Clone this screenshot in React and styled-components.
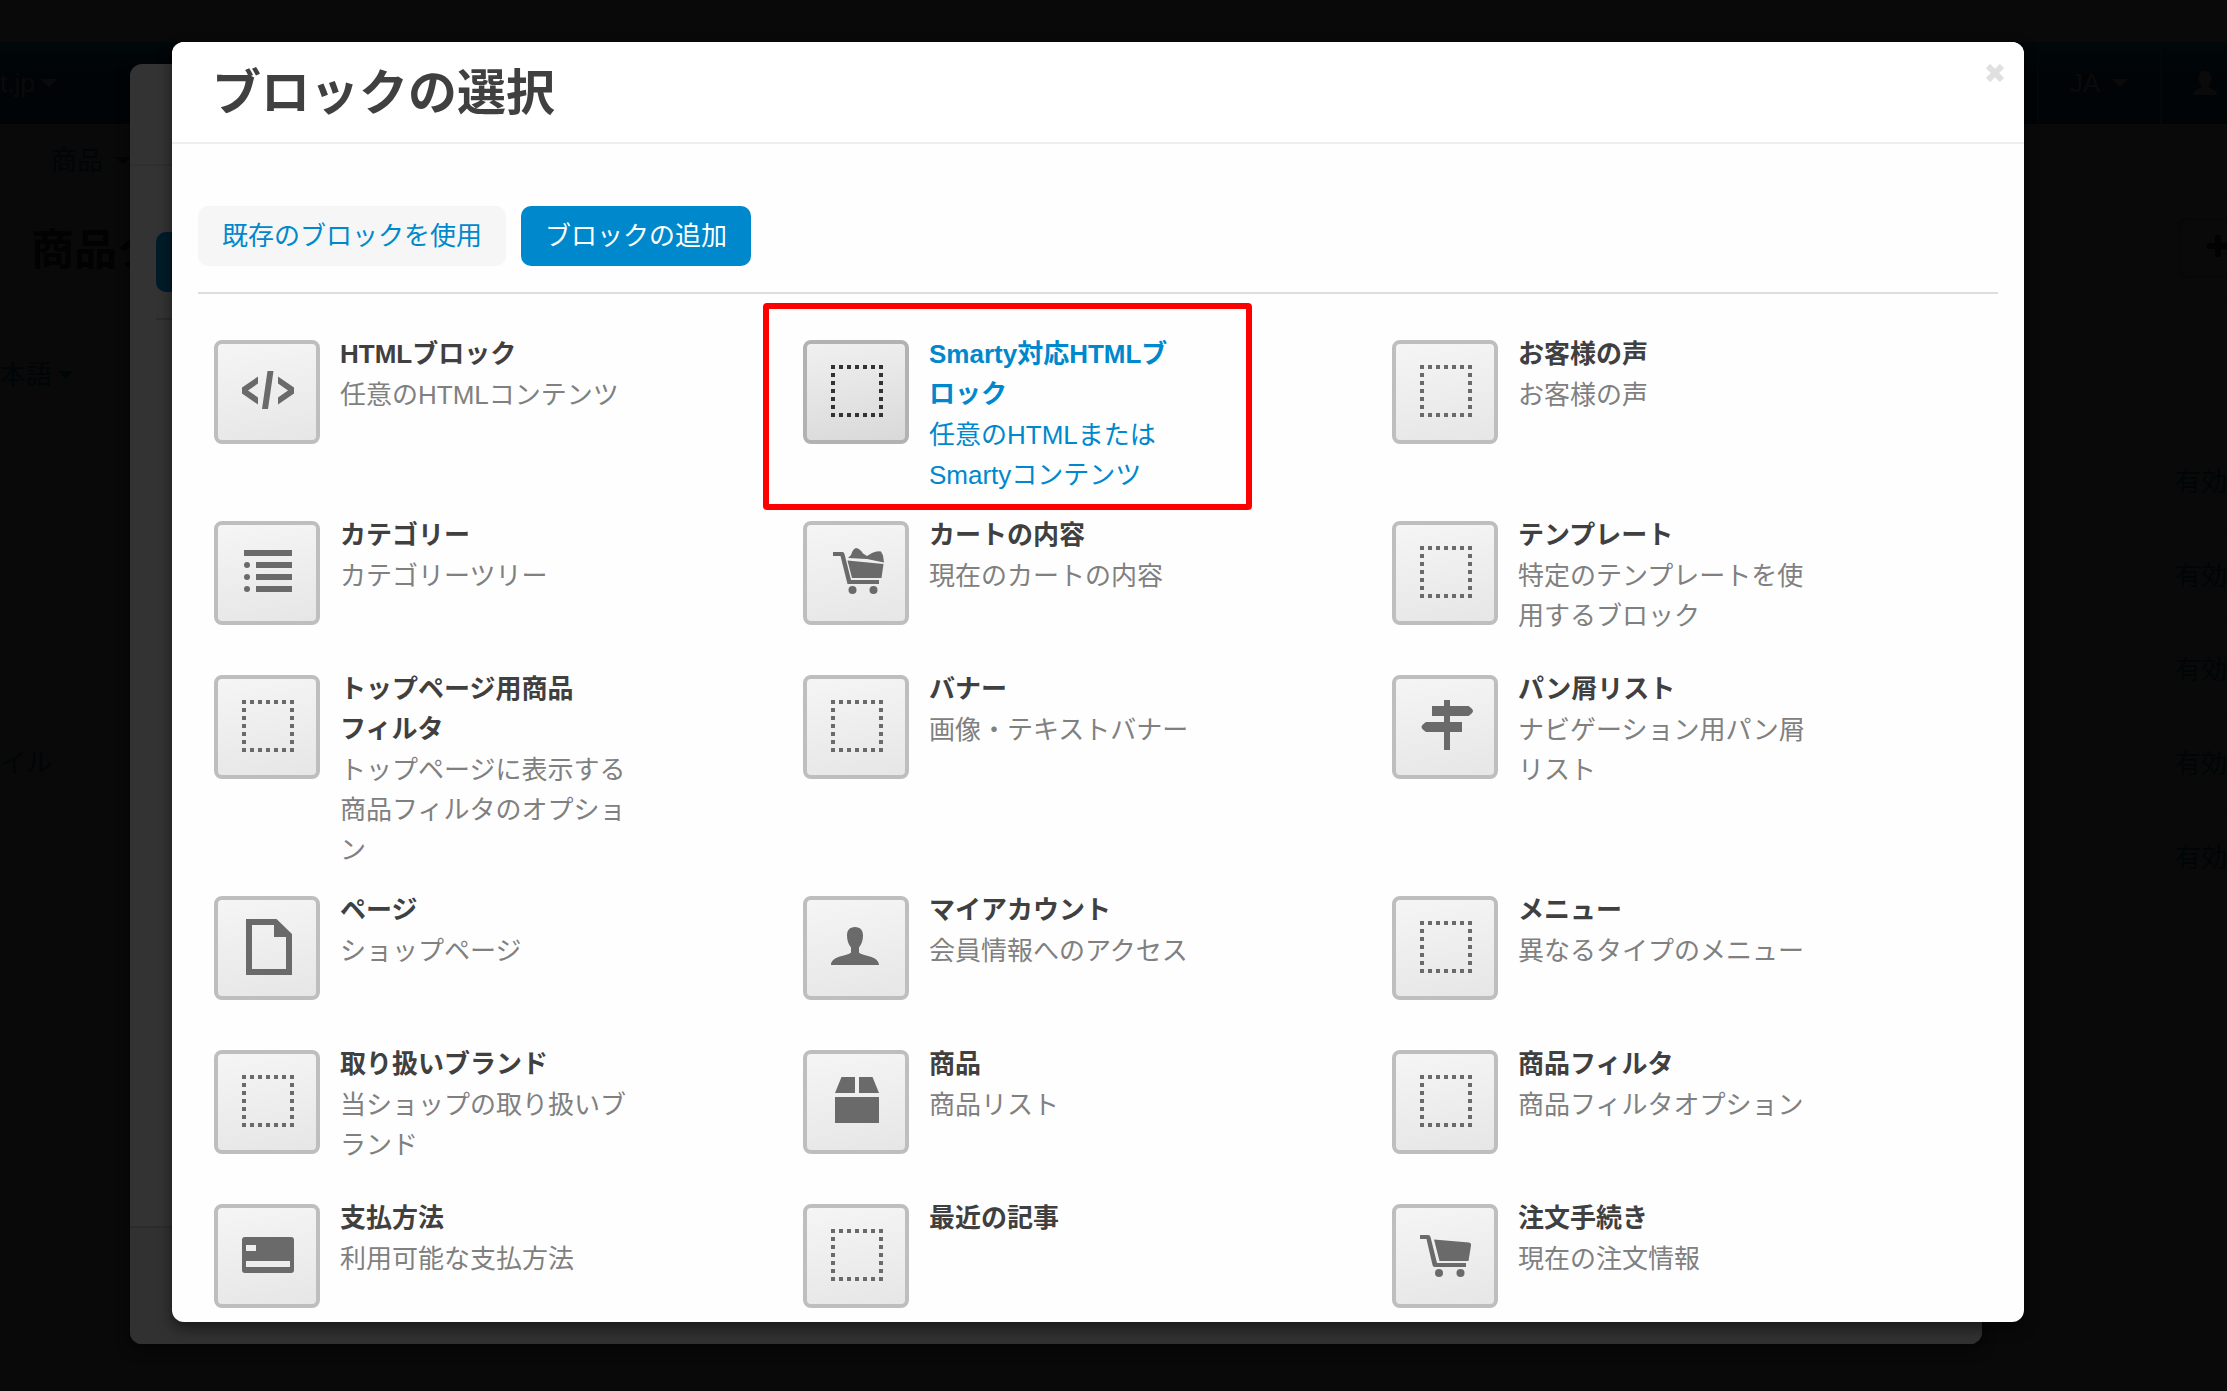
import React from "react";
import styled, { createGlobalStyle, css } from "styled-components";

const GlobalStyle = createGlobalStyle`
  * { box-sizing: border-box; }
  html, body { margin: 0; background: #090909; }
  body {
    font-family: "Liberation Sans", "Noto Sans CJK JP", sans-serif;
    font-size: 26px;
    line-height: 40px;
    color: #404040;
    overflow: hidden;
  }
  a { color: inherit; text-decoration: none; }
  h1, h2, h3, p, ul { margin: 0; padding: 0; }
  ul { list-style: none; }
`;

const Stage = styled.div`
  position: relative;
  height: 100vh;
  overflow: hidden;
`;

/* ---------- dimmed page behind the dialogs ---------- */

const Page = styled.div`
  color: #000508;
  padding-top: 42px;
`;

const TopNav = styled.nav`
  height: 82px;
  display: flex;
  justify-content: space-between;
  align-items: stretch;
  background: linear-gradient(#00080a, #000406 40%);
  color: #0b0a0a;
`;

const NavGroup = styled.div`
  display: flex;
  padding-right: 10px;
`;

const NavLink = styled.a`
  display: flex;
  align-items: center;
  gap: ${(p) => (p.$tight ? 6 : 12)}px;
`;

const NavCell = styled(NavLink)`
  padding-left: 31px;
  border-left: 2px solid #00080b;
  &:not(:last-child) { padding-right: 32px; }
`;

const Caret = styled.span`
  border: 8px solid transparent;
  border-top-color: currentColor;
  border-bottom: 0;
`;

const SubNav = styled.nav`
  height: 74px;
  padding-left: 51px;
  display: flex;
  align-items: center;
  border-bottom: 1px solid #080808;
`;

const TitleBar = styled.header`
  height: 100px;
  padding-left: 31px;
  display: flex;
  align-items: center;
  justify-content: space-between;
  color: #020202;
  border-bottom: 1px solid #080808;
`;

const PageTitle = styled.h1`
  padding-top: 4px;
  font-size: 43px;
`;

const AddButton = styled.button`
  width: 48px;
  height: 60px;
  padding: 0 0 0 26px;
  border: 2px solid #070707;
  border-right: 0;
  border-radius: 8px 0 0 8px;
  background: #090909;
  color: #020202;
`;

const Columns = styled.div`
  display: flex;
  justify-content: space-between;
`;

const SideList = styled.ul`
  width: 130px;
  display: grid;
  grid-template-rows: 154px 78px 186px 94px;
`;

const SideRow = styled.li`
  display: flex;
  align-items: center;
  border-bottom: ${(p) => (p.$line ? "1px solid #080808" : "0")};
`;

const StatusList = styled.ul`
  width: 245px;
  padding-top: 137px;
`;

const StatusRow = styled.li`
  height: 94px;
  display: flex;
  align-items: center;
  justify-content: flex-end;
  border-bottom: 1px solid #080808;
  &:last-child { border-bottom: 0; }
`;

/* ---------- dialogs ---------- */

const dialogFrame = css`
  position: absolute;
  border-radius: 12px;
  overflow: hidden;
  display: flex;
  flex-direction: column;
`;

const BackDialog = styled.div`
  ${dialogFrame}
  inset: 64px 245px 47px 130px;
  background: #333;
  box-shadow: 0 6px 14px rgba(0, 0, 0, 0.5);
`;

const BackHeader = styled.div`
  height: 102px;
  border-bottom: 2px solid #2f2f2f;
`;

const BackBody = styled.div`
  flex: 1;
  padding: 66px 26px 0;
`;

const BackTab = styled.div`
  width: 308px;
  height: 60px;
  border-radius: 10px;
  background: #001b29;
`;

const BackRule = styled.div`
  margin-top: 26px;
  height: 2px;
  background: #2b2b2b;
`;

const BackFooter = styled.div`
  height: 118px;
  border-top: 2px solid #2c2c2c;
  background: #313131;
`;

const Dialog = styled.section`
  ${dialogFrame}
  inset: 42px 203px 69px 172px;
  background: #fefefe;
  box-shadow: 0 6px 14px rgba(0, 0, 0, 0.5);
`;

const DialogHeader = styled.header`
  flex: none;
  height: 102px;
  padding: 0 20px 0 40px;
  display: flex;
  justify-content: space-between;
  align-items: flex-start;
  background: #fff;
  border-bottom: 2px solid #eee;
`;

const DialogTitle = styled.h2`
  font-size: 49px;
  line-height: 102px;
`;

const CloseButton = styled.button`
  width: 18px;
  height: 18px;
  margin-top: 22px;
  padding: 0;
  border: 0;
  background: none;
  color: #e0e0e0;
  line-height: 0;
  cursor: pointer;
`;

const DialogBody = styled.div`
  padding: 62px 26px 0;
`;

const Tabs = styled.nav`
  display: flex;
  gap: 15px;
  padding-bottom: 26px;
  border-bottom: 2px solid #ddd;
`;

const Tab = styled.a`
  padding: 10px 24px;
  border-radius: 10px;
  background: ${(p) => (p.$active ? "#0088cc" : "#f6f6f6")};
  color: ${(p) => (p.$active ? "#fff" : "#0088cc")};
`;

const BlockGrid = styled.ul`
  display: grid;
  grid-template-columns: repeat(3, 1fr);
  padding: 40px 17px 0 16px;
`;

const BlockCell = styled.li`
  position: relative;
  min-height: 154px;
  padding-bottom: 20px;
`;

const BlockLink = styled.a`
  display: flex;
  align-items: flex-start;
  gap: 20px;
`;

const IconBox = styled.span`
  flex: none;
  width: 106px;
  height: 104px;
  margin-top: 6px;
  border: 4px solid ${(p) => (p.$active ? "#b2b2b2" : "#bebebe")};
  border-radius: 8px;
  background: ${(p) =>
    p.$active
      ? "linear-gradient(170deg, #f0f0f0, #d9d9d9)"
      : "linear-gradient(170deg, #f5f5f5, #e6e6e6)"};
  color: ${(p) => (p.$active ? "#333" : "#6a6a6a")};
  line-height: 0;
`;

const BlockText = styled.span`
  width: 292px;
  white-space: pre-line;
`;

const BlockName = styled.strong`
  display: block;
  margin-bottom: 1px;
  color: ${(p) => (p.$active ? "#0088cc" : "#404040")};
`;

const BlockInfo = styled.span`
  display: block;
  color: ${(p) => (p.$active ? "#0088cc" : "#808080")};
`;

const Marker = styled.span`
  position: absolute;
  left: -40px;
  top: -31px;
  width: 489px;
  height: 207px;
  border: 6px solid #f00;
  border-radius: 4px;
  pointer-events: none;
`;

/* ---------- drawings ---------- */

const steps = [0, 1, 2, 3, 4, 5, 6];

const drawings = {
  dotted: (
    <>
      {steps.map((i) => (
        <g key={i}>
          <rect x={28 + i * 8} y="25" width="4" height="4" />
          <rect x={28 + i * 8} y="73" width="4" height="4" />
          <rect x="28" y={25 + i * 8} width="4" height="4" />
          <rect x="76" y={25 + i * 8} width="4" height="4" />
        </g>
      ))}
    </>
  ),
  code: (
    <path d="M44 36.500v7L34 50.500l10 7v7L28 53.500v-6zM64 36.500v7l10 7-10 7v7l16-11v-6zM53.500 31h6l-5.500 38h-6z" />
  ),
  list: (
    <>
      <path d="M30 29h48v6H30zM42 41h36v6H42zM42 53h36v6H42zM42 65h36v6H42z" />
      <circle cx="33" cy="44" r="3" />
      <circle cx="33" cy="56" r="3" />
      <circle cx="33" cy="68" r="3" />
    </>
  ),
  fullCart: (
    <>
      <path d="M30 31h9.500q1.500 0 2 2L48 59h28v4H44.500L37.500 35H30z" />
      <path d="M44.500 39.500l36 3.500-2 14H49z" />
      <path d="M45 37l3-3q2-6.500 5-7 4 .500 7 5.500l4 2.500 5-3q5-2.500 9-1.500l2 4 1 7-17-3.500z" />
      <circle cx="49.500" cy="69" r="4" />
      <circle cx="70.500" cy="69" r="4" />
    </>
  ),
  cart: (
    <>
      <path d="M28 31h8q2 0 2.500 2L45 59h29v4H42.500q-1.500 0-2-2L34.500 35H28z" />
      <path d="M42 35.500l35 3q2.500.500 2 3L76.500 57h-29z" />
      <circle cx="47" cy="69" r="4" />
      <circle cx="68.500" cy="69" r="4" />
    </>
  ),
  signpost: (
    <path d="M52 25h6v6h18.500q4.500 3 4.500 5t-4.500 5H58v6h12v10H58v18h-6V57H34q-4.500-3-4.500-5t4.500-5h18v-6H40V31h12z" />
  ),
  page: (
    <path fillRule="evenodd" d="M32 23h30.500L78 38v41H32zM38 29v44h34V41H60V29z" />
  ),
  user: (
    <path d="M52 31c5.500 0 8 3.500 8 8.500 0 5-1.500 9-4 12v4.500c0 4 20 3 20 13H28c0-10 20-9 20-13v-4.500c-2.500-3-4-7-4-12 0-5 2.500-8.500 8-8.500z" />
  ),
  box: <path d="M32 47h44v26H32zM38.500 27H52v16H32zM56 27h13.500L76 43H56z" />,
  card: (
    <path
      fillRule="evenodd"
      d="M31 33h46q3 0 3 3v30q0 3-3 3H31q-3 0-3-3V36q0-3 3-3zM32 41v6h10v-6zM32 57v6h44v-6z"
    />
  ),
};

function BlockIcon({ name }) {
  return (
    <svg width="98" height="96" viewBox="4 4 98 96" fill="currentColor" aria-hidden="true">
      {drawings[name]}
    </svg>
  );
}

const blocks = [
  { icon: "code", name: "HTMLブロック", info: "任意のHTMLコンテンツ" },
  { icon: "dotted", name: "Smarty対応HTMLブ\nロック", info: "任意のHTMLまたは\nSmartyコンテンツ", active: true },
  { icon: "dotted", name: "お客様の声", info: "お客様の声" },
  { icon: "list", name: "カテゴリー", info: "カテゴリーツリー" },
  { icon: "fullCart", name: "カートの内容", info: "現在のカートの内容" },
  { icon: "dotted", name: "テンプレート", info: "特定のテンプレートを使\n用するブロック" },
  { icon: "dotted", name: "トップページ用商品\nフィルタ", info: "トップページに表示する\n商品フィルタのオプショ\nン" },
  { icon: "dotted", name: "バナー", info: "画像・テキストバナー" },
  { icon: "signpost", name: "パン屑リスト", info: "ナビゲーション用パン屑\nリスト" },
  { icon: "page", name: "ページ", info: "ショップページ" },
  { icon: "user", name: "マイアカウント", info: "会員情報へのアクセス" },
  { icon: "dotted", name: "メニュー", info: "異なるタイプのメニュー" },
  { icon: "dotted", name: "取り扱いブランド", info: "当ショップの取り扱いブ\nランド" },
  { icon: "box", name: "商品", info: "商品リスト" },
  { icon: "dotted", name: "商品フィルタ", info: "商品フィルタオプション" },
  { icon: "card", name: "支払方法", info: "利用可能な支払方法" },
  { icon: "dotted", name: "最近の記事", info: "" },
  { icon: "cart", name: "注文手続き", info: "現在の注文情報" },
];

function BackgroundPage() {
  return (
    <Page>
      <TopNav>
        <NavLink href="#" $tight>t.jp <Caret /></NavLink>
        <NavGroup>
          <NavCell href="#">JA <Caret /></NavCell>
          <NavCell href="#" aria-label="アカウント">
            <svg width="24" height="24" viewBox="0 0 24 24" fill="currentColor">
              <path d="M12 0c4 0 6.500 2.500 6.500 6.500S17 13 15.500 15c0 3 8.500 2.500 8.500 9H0c0-6.500 8.500-6 8.500-9C7 13 5.500 10.500 5.500 6.500S8 0 12 0z" />
            </svg>
          </NavCell>
        </NavGroup>
      </TopNav>
      <SubNav>
        <NavLink href="#">商品 <Caret /></NavLink>
      </SubNav>
      <TitleBar>
        <PageTitle>商品タ</PageTitle>
        <AddButton type="button" aria-label="追加">
          <svg width="22" height="22" viewBox="0 0 22 22" fill="currentColor">
            <path d="M8 0h6v8h8v6h-8v8H8v-8H0V8h8z" />
          </svg>
        </AddButton>
      </TitleBar>
      <Columns>
        <SideList>
          <SideRow><NavLink href="#" $tight>本語 <Caret /></NavLink></SideRow>
          <SideRow $line />
          <SideRow />
          <SideRow $line><NavLink href="#">イル</NavLink></SideRow>
        </SideList>
        <StatusList>
          {[1, 2, 3, 4, 5].map((n) => (
            <StatusRow key={n}><a href="#">有効</a></StatusRow>
          ))}
        </StatusList>
      </Columns>
    </Page>
  );
}

export default function App() {
  return (
    <Stage>
      <GlobalStyle />
      <BackgroundPage />
      <BackDialog>
        <BackHeader />
        <BackBody>
          <BackTab />
          <BackRule />
        </BackBody>
        <BackFooter />
      </BackDialog>
      <Dialog role="dialog" aria-labelledby="dialog-title">
        <DialogHeader>
          <DialogTitle id="dialog-title">ブロックの選択</DialogTitle>
          <CloseButton type="button" aria-label="閉じる">
            <svg width="18" height="18" viewBox="0 0 18 18" stroke="currentColor" strokeWidth="6">
              <path d="M2 2l14 14M16 2L2 16" />
            </svg>
          </CloseButton>
        </DialogHeader>
        <DialogBody>
          <Tabs>
            <Tab href="#">既存のブロックを使用</Tab>
            <Tab href="#" $active>ブロックの追加</Tab>
          </Tabs>
          <BlockGrid>
            {blocks.map((b) => (
              <BlockCell key={b.name}>
                <BlockLink href="#">
                  <IconBox $active={b.active}><BlockIcon name={b.icon} /></IconBox>
                  <BlockText>
                    <BlockName $active={b.active}>{b.name}</BlockName>
                    <BlockInfo $active={b.active}>{b.info}</BlockInfo>
                  </BlockText>
                </BlockLink>
                {b.active && <Marker />}
              </BlockCell>
            ))}
          </BlockGrid>
        </DialogBody>
      </Dialog>
    </Stage>
  );
}
